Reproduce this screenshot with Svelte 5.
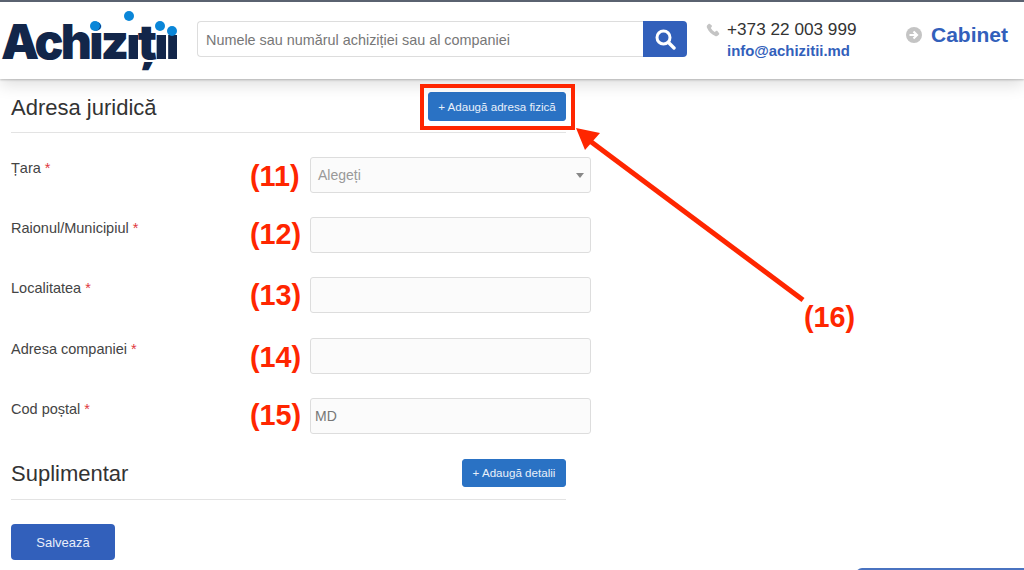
<script>
    const fields = [
        { label: "Țara", num: "(11)", nudge: 0, select: true, placeholder: "Alegeți" },
        { label: "Raionul/Municipiul", num: "(12)", nudge: -2 },
        { label: "Localitatea", num: "(13)", nudge: -1 },
        { label: "Adresa companiei", num: "(14)", nudge: 0 },
        { label: "Cod poștal", num: "(15)", nudge: -2, value: "MD" },
    ];
</script>

<div class="page">
    <header class="topbar">
        <a class="logo" href="#top">
            <span class="logo-text">Achiz<span class="i">i</span>ț<span class="i">i</span><span class="i">i</span></span>
            <i class="dot d1"></i>
            <i class="dot d2"></i>
            <i class="dot d3"></i>
            <i class="dot d4"></i>
        </a>

        <form class="search">
            <input type="text" placeholder="Numele sau numărul achiziției sau al companiei" />
            <button type="button" aria-label="Caută">
                <svg width="22" height="22" viewBox="0 0 22 22" fill="none" stroke="#fff">
                    <circle cx="9.5" cy="9.5" r="6.5" stroke-width="3" />
                    <path d="M14.5 14.5L20 20" stroke-width="3.4" stroke-linecap="round" />
                </svg>
            </button>
        </form>

        <div class="contact">
            <svg class="phone" width="14" height="14" viewBox="0 0 24 24" fill="#c4c4c4">
                <path d="M6.6 1.5c-.7-.5-1.6-.4-2.200.2L2.500 3.600C1.300 4.800 1 6.600 1.700 8.200c3 6.500 7.700 11.200 14.100 14.100 1.600.7 3.400.4 4.600-.8l1.900-1.900c.6-.6.7-1.500.2-2.200l-3-3.500c-.6-.7-1.600-.8-2.300-.3l-2.400 1.700c-2.800-1.600-5-3.800-6.600-6.600l1.700-2.400c.5-.7.4-1.700-.3-2.300z" />
            </svg>
            <div class="contact-text">
                <div class="tel">+373 22 003 999</div>
                <a class="mail" href="#top">info@achizitii.md</a>
            </div>
        </div>

        <a class="cabinet" href="#top">
            <svg width="16" height="16" viewBox="0 0 16 16">
                <circle cx="8" cy="8" r="8" fill="#c4c4c4" />
                <path d="M3.500 8h7M7.500 4.500L11 8l-3.500 3.500" fill="none" stroke="#fff" stroke-width="2.200" />
            </svg>
            <span>Cabinet</span>
        </a>
    </header>

    <main class="content">
        <div class="section-head first">
            <h2>Adresa juridică</h2>
            <button type="button" class="btn-add wide">+ Adaugă adresa fizică</button>
        </div>

        {#each fields as f}
            <div class="row">
                <label class="field-label" for={f.num}>{f.label} <span class="req">*</span></label>
                {#if f.select}
                    <div class="select" id={f.num}>
                        <span>{f.placeholder}</span>
                        <i class="caret"></i>
                    </div>
                {:else}
                    <input id={f.num} class="control" type="text" value={f.value ?? ""} />
                {/if}
                <span class="num" style="margin-top: {f.nudge}px">{f.num}</span>
            </div>
        {/each}

        <div class="section-head second">
            <h2>Suplimentar</h2>
            <button type="button" class="btn-add">+ Adaugă detalii</button>
        </div>

        <button type="button" class="btn-save">Salvează</button>
    </main>

    <!-- adnotarile de pe captura -->
    <svg class="marks" width="1024" height="570" viewBox="0 0 1024 570">
        <rect x="422" y="86" width="151" height="42" fill="none" stroke="#ff2600" stroke-width="4" />
        <path d="M803 300L590 141" stroke="#ff2600" stroke-width="5" />
        <path d="M576 128L600 133L585 150Z" fill="#ff2600" />
    </svg>
    <span class="num-free">(16)</span>
    <div class="widget"></div>
</div>

<style>
    :global(body) {
        margin: 0;
        background: #fff;
    }

    .page {
        position: relative;
        width: 1024px;
        height: 570px;
        overflow: hidden;
        font-family: "Liberation Sans", Arial, sans-serif;
        color: #333;
    }

    .topbar {
        position: relative;
        height: 77px;
        border-top: 2px solid #5a6270;
        background: #fff;
        box-shadow: 0 1px 2px rgba(0, 0, 0, 0.22), 0 5px 16px rgba(0, 0, 0, 0.14);
        display: flex;
        align-items: flex-start;
    }

    .logo {
        position: relative;
        display: block;
        width: 176px;
        margin-left: 2px;
        height: 77px;
        text-decoration: none;
    }

    .logo-text {
        position: absolute;
        left: -1px;
        top: 10px;
        font-family: Inter, "Liberation Sans", sans-serif;
        font-size: 48px;
        line-height: 60px;
        font-weight: 900;
        color: #12264a;
        letter-spacing: -2.700px;
        white-space: nowrap;
    }

    /* punctul literei i e ascuns, peste el vine cercul albastru */
    .logo-text .i {
        background: linear-gradient(transparent 0 23px, #12264a 23px);
        -webkit-background-clip: text;
        background-clip: text;
        color: transparent;
    }

    .dot {
        position: absolute;
        width: 10px;
        height: 10px;
        border-radius: 50%;
        background: #0a86d8;
    }
    .d1 { left: 88px; top: 19px; }
    .d2 { left: 122px; top: 9px; }
    .d3 { left: 153px; top: 19px; }
    .d4 { left: 165px; top: 24px; }

    .search {
        display: flex;
        margin: 19px 0 0 19px;
        width: 490px;
        height: 36px;
    }

    .search input {
        flex: 1;
        min-width: 0;
        box-sizing: border-box;
        border: 1px solid #ddd;
        border-right: none;
        border-radius: 4px 0 0 4px;
        padding: 2px 8px 0;
        font: 14.400px "Liberation Sans", Arial, sans-serif;
        outline: none;
    }
    .search input::placeholder {
        color: #777;
        opacity: 1;
    }

    .search button {
        width: 44px;
        border: none;
        padding: 0;
        background: #3260bb;
        border-radius: 0 4px 4px 0;
        display: flex;
        align-items: center;
        justify-content: center;
    }

    .contact {
        display: flex;
        margin: 19px 0 0 19px;
        width: 150px;
    }

    .phone {
        margin: 2px 7px 0 0;
        flex: none;
    }

    .tel {
        font-size: 17.200px;
        line-height: 17px;
        white-space: nowrap;
    }

    .mail {
        display: block;
        margin-top: 5px;
        font-size: 14.900px;
        line-height: 17px;
        font-weight: 700;
        color: #3260bb;
        text-decoration: none;
    }

    .cabinet {
        display: flex;
        align-items: center;
        gap: 9px;
        margin: 19px 0 0 50px;
        font-size: 21px;
        line-height: 28px;
        font-weight: 700;
        color: #3260bb;
        text-decoration: none;
    }

    .content {
        padding: 0 0 0 11px;
        width: 555px;
    }

    .section-head {
        display: flex;
        justify-content: space-between;
        align-items: center;
        border-bottom: 1px solid #e3e3e3;
    }
    .section-head.first {
        padding: 13px 0 11px;
        margin-bottom: 24px;
    }
    .section-head.second {
        padding: 1px 0 12px;
        margin-bottom: 24px;
    }

    h2 {
        margin: 0 0 -2px;
        font-size: 22px;
        font-weight: 400;
        line-height: 30px;
        color: #333;
    }

    .btn-add {
        height: 28px;
        width: 104px;
        padding: 0;
        border: 1px solid #2a72c4;
        border-radius: 3px;
        background: #2a72c4;
        color: #e8f0fa;
        font: 11.600px "Liberation Sans", Arial, sans-serif;
        white-space: nowrap;
    }
    .btn-add.wide {
        width: 138px;
        height: 29px;
    }

    .row {
        position: relative;
        display: grid;
        grid-template-columns: 299px 281px;
        width: 580px;
        height: 36px;
        margin-bottom: 24.200px;
    }

    .field-label {
        padding-top: 3px;
        font-size: 14.500px;
        line-height: 16px;
        color: #444;
    }

    .req {
        color: #e0393e;
    }

    .control,
    .select {
        box-sizing: border-box;
        height: 36px;
        width: 281px;
        border: 1px solid #ddd;
        border-radius: 3px;
        background: #fbfbfb;
        outline: none;
        font: 14px "Liberation Sans", Arial, sans-serif;
        color: #777;
        padding: 0 4px;
    }

    .select {
        display: flex;
        align-items: center;
        justify-content: space-between;
        padding: 0 6px 0 7px;
        color: #999;
    }

    .caret {
        border-left: 4px solid transparent;
        border-right: 4px solid transparent;
        border-top: 5px solid #888;
    }

    .num,
    .num-free {
        position: absolute;
        font-size: 28.800px;
        line-height: 32px;
        font-weight: 700;
        color: #ff2600;
        white-space: nowrap;
    }

    .num {
        left: 239px;
        top: 3px;
    }

    .num-free {
        left: 804px;
        top: 301px;
    }

    .btn-save {
        display: block;
        width: 104px;
        height: 36px;
        padding: 2px 0 0;
        border: none;
        border-radius: 4px;
        background: #3260bb;
        color: #e8eefa;
        font: 13px "Liberation Sans", Arial, sans-serif;
    }

    .marks {
        position: absolute;
        left: 0;
        top: 0;
        pointer-events: none;
    }

    .widget {
        position: absolute;
        left: 856px;
        top: 568px;
        width: 180px;
        height: 20px;
        border-radius: 6px 0 0 0;
        background: #4a73c0;
    }
</style>
